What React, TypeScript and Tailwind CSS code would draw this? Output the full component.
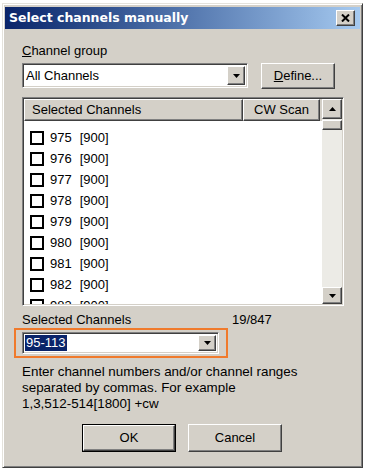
import React from "react";

const rows = [975, 976, 977, 978, 979, 980, 981, 982, 983];

// Win classic bevels
const raised =
  "border border-t-white border-l-white border-r-[#404040] border-b-[#404040] shadow-[inset_-1px_-1px_0_#808080] bg-[#d4d0c8]";
const sunken =
  "border border-t-[#808080] border-l-[#808080] border-r-white border-b-white shadow-[inset_1px_1px_0_#404040,inset_-1px_-1px_0_#d4d0c8]";

function Arrow({ up }: { up?: boolean }) {
  return (
    <svg width="7" height="4" viewBox="0 0 7 4">
      <path d={up ? "M3.5 0L7 4H0Z" : "M0 0H7L3.5 4Z"} fill="black" />
    </svg>
  );
}

function Combo({ width, height, children }: { width: string; height: string; children: React.ReactNode }) {
  return (
    <div className={`${width} ${height} ${sunken} bg-white flex items-center p-[2px]`}>
      <div className="flex-1 flex items-center">{children}</div>
      <div className={`w-[18px] h-full ${raised} flex items-center justify-center`}>
        <Arrow />
      </div>
    </div>
  );
}

export default function App() {
  return (
    <div
      className="w-[367px] h-[473px] bg-white pt-[3px] pl-[2px] text-black"
      style={{ fontFamily: '"Liberation Sans", Arial, sans-serif' }}
    >
      <div className="w-[361px] h-[465px] bg-[#d4d0c8] border border-t-[#e4e2dc] border-l-[#e4e2dc] border-r-[#404040] border-b-[#404040] shadow-[inset_1px_1px_0_#fff,inset_-1px_-1px_0_#808080] px-[2px] pt-[3px] flex flex-col">
        {/* Title bar */}
        <div className="h-[22px] flex items-center justify-between pl-[4px] pr-[5px] bg-gradient-to-r from-[#0a246a] to-[#a6caf0]">
          <span
            className="text-white font-bold text-[12.5px] leading-none"
            style={{ fontFamily: '"DejaVu Sans", Tahoma, sans-serif' }}
          >
            Select channels manually
          </span>
          <div className={`w-[19px] h-[16px] ${raised} flex items-center justify-center`}>
            <svg width="9" height="8" viewBox="0 0 9 8">
              <path d="M1 0.5L8 7.5M8 0.5L1 7.5" stroke="black" strokeWidth="2" />
            </svg>
          </div>
        </div>

        {/* Body */}
        <div className="flex flex-col pl-[17px] pr-[16px] text-[13px]">
          <div className="mt-[14px] h-[16px] leading-[16px]">
            <span className="underline">C</span>hannel group
          </div>

          <div className="mt-[4px] flex items-start">
            <Combo width="w-[226px]" height="h-[25px]">
              <span className="pl-[1px] leading-[16px]">All Channels</span>
            </Combo>
            <div className={`ml-[13px] w-[74px] h-[26px] ${raised} flex items-center justify-center`}>
              <span>
                <span className="underline">D</span>efine...
              </span>
            </div>
          </div>

          {/* List */}
          <div className={`mt-[8px] w-[322px] h-[209px] ${sunken} p-[1px] flex`}>
            <div className="flex-1 flex flex-col bg-white overflow-hidden">
              <div className="h-[22px] flex shrink-0 bg-[#d4d0c8]">
                <div className={`w-[219px] h-full ${raised} pl-[7px] flex items-center`}>Selected Channels</div>
                <div className={`w-[77px] h-full ${raised} flex items-center justify-center`}>CW Scan</div>
              </div>
              <div className="pt-[6px] flex flex-col">
                {rows.map((n) => (
                  <div key={n} className="h-[21px] shrink-0 flex items-center pl-[6px]">
                    <div className="w-[14px] h-[14px] border-2 border-black bg-white" />
                    <span className="ml-[6px]">{n}</span>
                    <span className="ml-[8px]">[900]</span>
                  </div>
                ))}
              </div>
            </div>
            <div className="w-[20px] flex flex-col bg-[#ecebe6]">
              <div className={`h-[20px] ${raised} flex items-center justify-center`}>
                <Arrow up />
              </div>
              <div className={`mt-[1px] h-[10px] ${raised}`} />
              <div className="flex-1" />
              <div className={`h-[17px] ${raised} flex items-center justify-center`}>
                <Arrow />
              </div>
            </div>
          </div>

          <div className="mt-[6px] h-[16px] leading-[16px] flex">
            <span className="w-[210px]">Selected Channels</span>
            <span>19/847</span>
          </div>

          <div className="-ml-[8px] w-[214px] h-[30px] border-2 border-[#f07a2c] pt-[2px] pl-[6px]">
            <Combo width="w-[197px]" height="h-[22px]">
              <span className="bg-[#0a246a] text-white leading-[16px] px-[1px]">95-113</span>
            </Combo>
          </div>

          <div className="mt-[6px] leading-[16px] text-[13.4px]">
            Enter channel numbers and/or channel ranges
            <br />
            separated by commas. For example
            <br />
            1,3,512-514[1800] +cw
          </div>

          <div className="mt-[12px] ml-[60px] flex gap-[12px]">
            <div className="w-[94px] h-[28px] border border-black">
              <div className={`w-full h-full ${raised} flex items-center justify-center`}>OK</div>
            </div>
            <div className={`w-[94px] h-[28px] ${raised} flex items-center justify-center`}>Cancel</div>
          </div>
        </div>
      </div>
    </div>
  );
}
